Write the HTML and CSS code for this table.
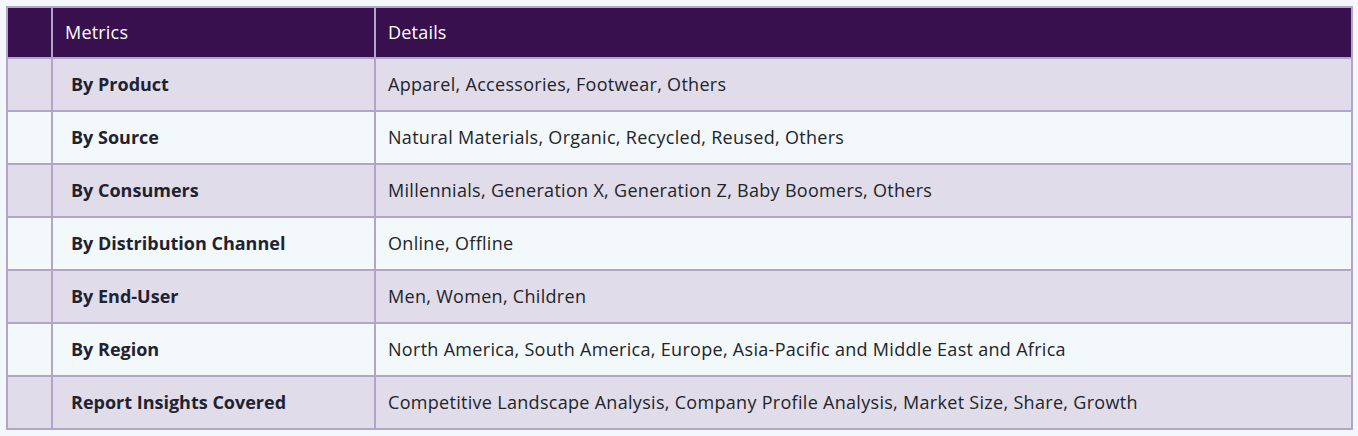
FILE: index.html
```html
<!DOCTYPE html>
<html lang="en">
<head>
<meta charset="utf-8">
<title>Report Metrics</title>
<link rel="stylesheet" href="styles.css">
</head>
<body>
<table class="metrics-table">
  <thead>
    <tr>
      <th class="col-idx"></th>
      <th class="col-metric">Metrics</th>
      <th class="col-detail">Details</th>
    </tr>
  </thead>
  <tbody>
    <tr><td class="col-idx"></td><td class="metric">By Product</td><td class="detail">Apparel, Accessories, Footwear, Others</td></tr>
    <tr><td class="col-idx"></td><td class="metric">By Source</td><td class="detail">Natural Materials, Organic, Recycled, Reused, Others</td></tr>
    <tr><td class="col-idx"></td><td class="metric">By Consumers</td><td class="detail">Millennials, Generation X, Generation Z, Baby Boomers, Others</td></tr>
    <tr><td class="col-idx"></td><td class="metric">By Distribution Channel</td><td class="detail">Online, Offline</td></tr>
    <tr><td class="col-idx"></td><td class="metric">By End-User</td><td class="detail">Men, Women, Children</td></tr>
    <tr><td class="col-idx"></td><td class="metric">By Region</td><td class="detail">North America, South America, Europe, Asia-Pacific and Middle East and Africa</td></tr>
    <tr><td class="col-idx"></td><td class="metric">Report Insights Covered</td><td class="detail">Competitive Landscape Analysis, Company Profile Analysis, Market Size, Share, Growth</td></tr>
  </tbody>
</table>
</body>
</html>
```
FILE: styles.css
```css
html, body {
  margin: 0;
  padding: 0;
  background: #f5f8fb;
}
body {
  padding: 6px 5px 0 6px;
  font-family: "Open Sans", Lato, sans-serif;
  color: #212529;
}
.metrics-table {
  border-collapse: collapse;
  width: 1347px;
  table-layout: fixed;
  border: 2px solid #b1a5c9;
}
.metrics-table th,
.metrics-table td {
  border: 2px solid #b1a5c9;
  text-align: left;
  vertical-align: middle;
  font-size: 18px;
  line-height: 22px;
  padding: 0 12px 2px;
}
.metrics-table th {
  background: #38104d;
  color: #ffffff;
  font-weight: 500;
  height: 51px;
  box-sizing: border-box;
  letter-spacing: 0.2px;
}
.col-idx { width: 45px; }
.col-metric { width: 323px; }
.metrics-table th.col-metric { padding-left: 12px; }
.metrics-table td {
  height: 49px;
}
.metrics-table td.metric {
  font-weight: 700;
  padding-left: 18px;
  color: #1f2230;
}
.metrics-table td.detail {
  padding-left: 12px;
  letter-spacing: 0.3px;
}
.metrics-table tbody tr:nth-child(odd) td { background: #e0dcea; }
.metrics-table tbody tr:nth-child(even) td { background: #f3f8fb; }
```
